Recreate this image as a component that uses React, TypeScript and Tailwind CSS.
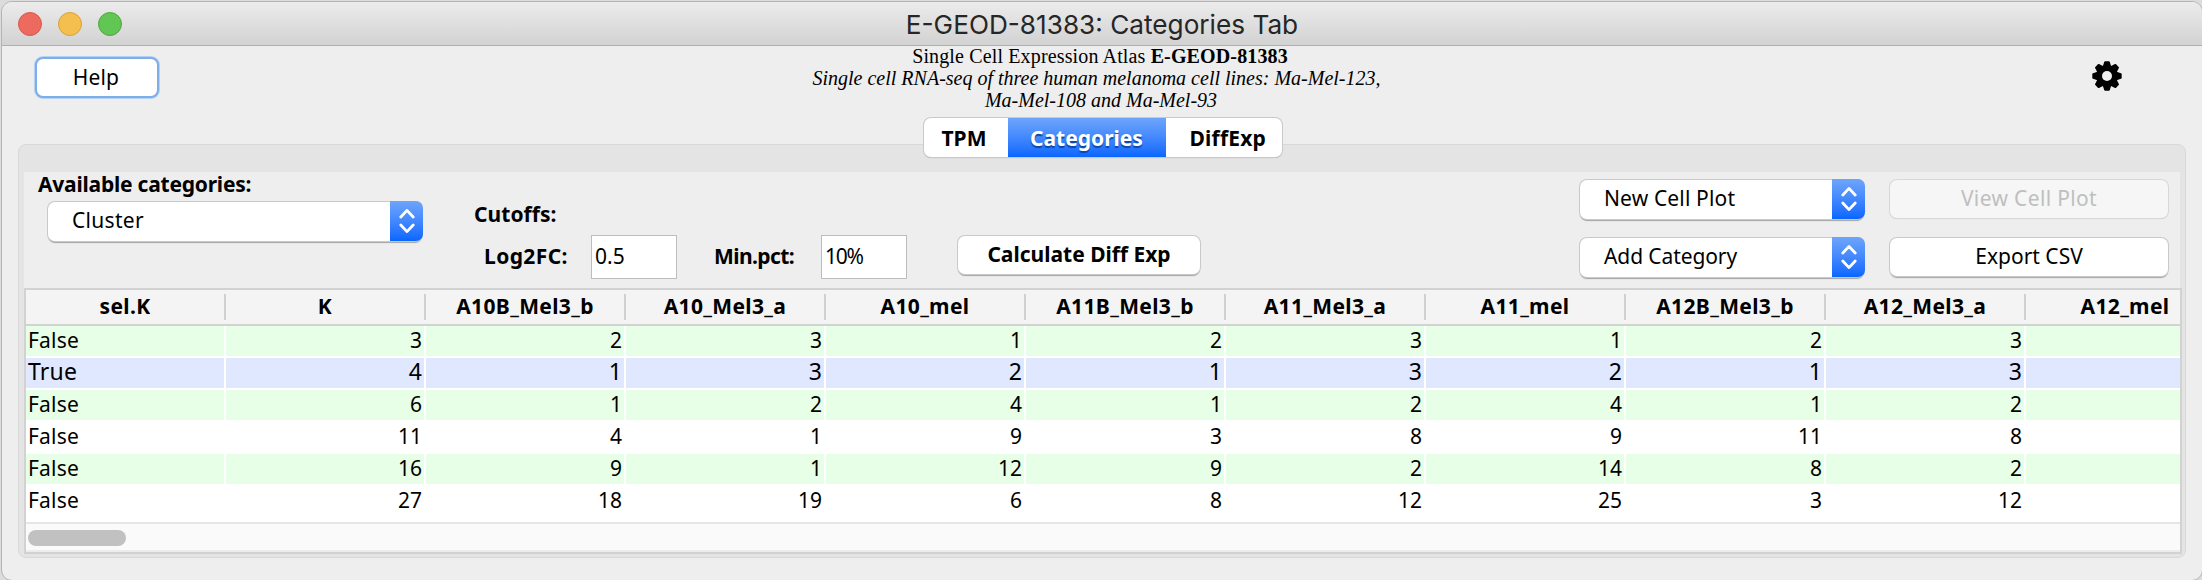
import type { ReactNode } from "react";

const columns = [
  "sel.K", "K", "A10B_Mel3_b", "A10_Mel3_a", "A10_mel", "A11B_Mel3_b",
  "A11_Mel3_a", "A11_mel", "A12B_Mel3_b", "A12_Mel3_a", "A12_mel",
];

const rows: (string | number)[][] = [
  ["False", 3, 2, 3, 1, 2, 3, 1, 2, 3, ""],
  ["True", 4, 1, 3, 2, 1, 3, 2, 1, 3, ""],
  ["False", 6, 1, 2, 4, 1, 2, 4, 1, 2, ""],
  ["False", 11, 4, 1, 9, 3, 8, 9, 11, 8, ""],
  ["False", 16, 9, 1, 12, 9, 2, 14, 8, 2, ""],
  ["False", 27, 18, 19, 6, 8, 12, 25, 3, 12, ""],
];

function rowStyle(index: number) {
  if (rows[index][0] === "True") return "bg-[#e0e8ff] text-[23px] leading-[27px]";
  return index % 2 === 0 ? "bg-[#e6ffe6] leading-[28px]" : "bg-white leading-[28px]";
}

function Gear() {
  return (
    <svg viewBox="-15 -15 30 30" className="h-[30px] w-[30px]" aria-label="Settings">
      <mask id="hole">
        <rect x="-15" y="-15" width="30" height="30" fill="white" />
        <circle r="5" fill="black" />
      </mask>
      <g mask="url(#hole)">
        <circle r="11" />
        {[0, 45, 90, 135].map((angle) => (
          <path
            key={angle}
            transform={`rotate(${angle})`}
            d="M-4.2 -9.5 L-2.8 -14 Q-2.6 -14.7 -1.8 -14.7 H1.8 Q2.6 -14.7 2.8 -14 L4.2 -9.5 V9.5 L2.8 14 Q2.6 14.7 1.8 14.7 H-1.8 Q-2.6 14.7 -2.8 14 L-4.2 9.5 Z"
          />
        ))}
      </g>
    </svg>
  );
}

function Select({ children, className }: { children: ReactNode; className: string }) {
  return (
    <div
      className={`flex h-[39px] rounded-[7px] bg-white shadow-[0_0_0_1px_#c9c9c9,0_1.5px_1px_0_#a3a3a3] ${className}`}
    >
      <div className="flex flex-1 items-center pb-[3px] pl-6">{children}</div>
      <div className="-mt-px -mr-px flex h-10 w-[33px] items-center justify-center rounded-r-[7px] bg-linear-to-b from-[#6ea5fb] to-[#0566ff]">
        <svg viewBox="0 0 16 26" className="h-[26px] w-4" fill="none" stroke="white" strokeWidth="2.8" strokeLinecap="round" strokeLinejoin="round">
          <path d="M1.8 9 L8 2.4 L14.2 9 M1.8 17 L8 23.6 L14.2 17" />
        </svg>
      </div>
    </div>
  );
}

function Button({ children, className }: { children: ReactNode; className: string }) {
  return (
    <button
      className={`flex h-[38px] items-center justify-center rounded-[7px] bg-white pb-0.5 shadow-[0_0_0_1px_#c9c9c9,0_1.5px_1px_0_#a3a3a3] ${className}`}
    >
      {children}
    </button>
  );
}

function Circle({ className }: { className: string }) {
  return <div className={`size-6 rounded-full border ${className}`} />;
}

export default function App() {
  return (
    <div className="h-[580px] w-[2202px] overflow-hidden bg-[#dcdcdc] pt-px pl-px font-['Noto_Sans',sans-serif] text-[21px] leading-[30px] whitespace-nowrap text-black">
      <div className="flex h-[580px] w-[2202px] flex-col overflow-hidden rounded-[11px] border border-[#b4b4b4] bg-[#eeeeee]">
        <header className="grid h-11 shrink-0 grid-cols-[1fr_auto_1fr] items-center border-b border-[#b0b0b0] bg-linear-to-b from-[#ececec] to-[#d2d2d2]">
          <div className="flex gap-4 pl-4">
            <Circle className="border-[#d9574c] bg-[#ed6a5f]" />
            <Circle className="border-[#d9a03f] bg-[#f5bf4f]" />
            <Circle className="border-[#50a73f] bg-[#62c655]" />
          </div>
          <h1 className="pt-0.5 font-[Inter,sans-serif] text-[26.2px] text-[#262626]">E-GEOD-81383: Categories Tab</h1>
        </header>

        <div className="grid h-[72px] shrink-0 grid-cols-[790px_608px_1fr]">
          <div className="pt-[11px] pl-[33px]">
            <button className="flex h-[41px] w-[124px] items-center justify-center rounded-[8px] border-2 border-[#7eaee8] bg-white pr-0.5 pb-0.5 tracking-[0.15px] shadow-[0_0_0_1px_#b5d2f3]">
              Help
            </button>
          </div>
          <div className="text-center font-['Liberation_Serif',serif] text-[20px] leading-[22px] text-black">
            <p className="-mt-px pl-2 tracking-[0.14px]">
              Single Cell Expression Atlas <b>E-GEOD-81383</b>
            </p>
            <p className="pl-px italic">Single cell RNA-seq of three human melanoma cell lines: Ma-Mel-123,</p>
            <p className="pl-[10px] italic">Ma-Mel-108 and Ma-Mel-93</p>
          </div>
          <div className="flex justify-end pt-[15px] pr-[80px]">
            <Gear />
          </div>
        </div>

        <div className="mx-4 flex w-[2168px] flex-col">
          <div className="relative z-10 ml-px flex h-[39px] self-center font-bold">
            <div className="flex overflow-clip rounded-[7px] bg-white shadow-[0_0_0_1px_#c9c9c9,0_1px_1px_0_#a3a3a3]">
              <span className="w-[84px] pt-[5px] pl-[18px]">TPM</span>
              <span className="w-[158px] bg-linear-to-b from-[#6ea5fb] to-[#0566ff] pt-[5px] text-center text-white [text-shadow:0_2px_1px_#0a47a8]">
                Categories
              </span>
              <span className="w-[116px] pt-[5px] pl-6 tracking-[0.2px]">DiffExp</span>
            </div>
          </div>

          <div className="-mt-[13px] flex h-[414px] flex-col rounded-[8px] border border-[#d8d8d8] bg-[#e4e4e4] px-[5px] pt-[27px]">
            <div className="flex h-[116px] shrink-0 bg-[#eeeeee]">
              <div className="w-[450px] pl-[14px]">
                <p className="-mt-[3px] font-bold tracking-[-0.22px]">Available categories:</p>
                <Select className="mt-[3px] ml-[10px] w-[374px] tracking-[0.3px]">Cluster</Select>
              </div>
              <div className="w-[484px] pt-[27px] font-bold">
                <p className="tracking-[0.05px]">Cutoffs:</p>
                <div className="mt-[6px] flex items-center">
                  <span className="w-[117px] pb-0.5 pl-[10px] tracking-[0.4px]">Log2FC:</span>
                  <div className="flex h-11 w-[86px] items-center border border-[#bdbdbd] bg-white pb-0.5 pl-[3px] font-normal">0.5</div>
                  <span className="w-36 pb-0.5 pl-[37px] tracking-[-0.6px]">Min.pct:</span>
                  <div className="flex h-11 w-[86px] items-center border border-[#bdbdbd] bg-white pb-0.5 pl-[3px] font-normal tracking-[-1.2px]">10%</div>
                </div>
              </div>
              <div className="pt-[64px]">
                <Button className="w-[242px] font-bold">Calculate Diff Exp</Button>
              </div>
              <div className="ml-auto grid grid-cols-[284px_278px] content-start gap-x-[26px] gap-y-[19px] pt-2 pr-3">
                <Select className="tracking-[0.15px]">New Cell Plot</Select>
                <button disabled className="flex h-[38px] items-center justify-center rounded-[7px] bg-[#f6f6f6] pb-0.5 tracking-[0.35px] text-[#bfbfbf] shadow-[0_0_0_1px_#d8d8d8,0_1px_1px_0_#cccccc]">
                  View Cell Plot
                </button>
                <Select className="tracking-[-0.1px]">Add Category</Select>
                <Button className="w-[278px]">Export CSV</Button>
              </div>
            </div>

            <div className="h-[266px] w-[2158px] overflow-hidden border-2 border-[#d2d2d2] bg-white">
              <div className="flex h-9 border-b-2 border-[#d2d2d2] bg-[#f4f4f4] pt-1 font-bold tracking-[0.35px]">
                {columns.map((name) => (
                  <div key={name} className="h-[26px] w-[200px] shrink-0 border-r-2 border-[#d0d0d0] text-center leading-[24px]">
                    {name}
                  </div>
                ))}
              </div>
              {rows.map((cells, rowIndex) => (
                <div key={rowIndex} className={`flex h-8 border-b-2 border-white ${rowStyle(rowIndex)}`}>
                  {cells.map((cell, index) => (
                    <div
                      key={index}
                      className={
                        index === 0
                          ? "w-[200px] shrink-0 border-r-2 border-white pl-0.5 tracking-[0.2px]"
                          : "w-[200px] shrink-0 border-r-2 border-white pr-0.5 text-right"
                      }
                    >
                      {cell}
                    </div>
                  ))}
                </div>
              ))}
              <div className="mt-1 h-[30px] border-t-2 border-b-2 border-t-[#e6e6e6] border-b-[#ececec] bg-[#fafafa] pt-[6px] pl-0.5">
                <div className="h-4 w-[98px] rounded-full bg-[#c1c1c1]" />
              </div>
            </div>
          </div>
        </div>
      </div>
    </div>
  );
}
